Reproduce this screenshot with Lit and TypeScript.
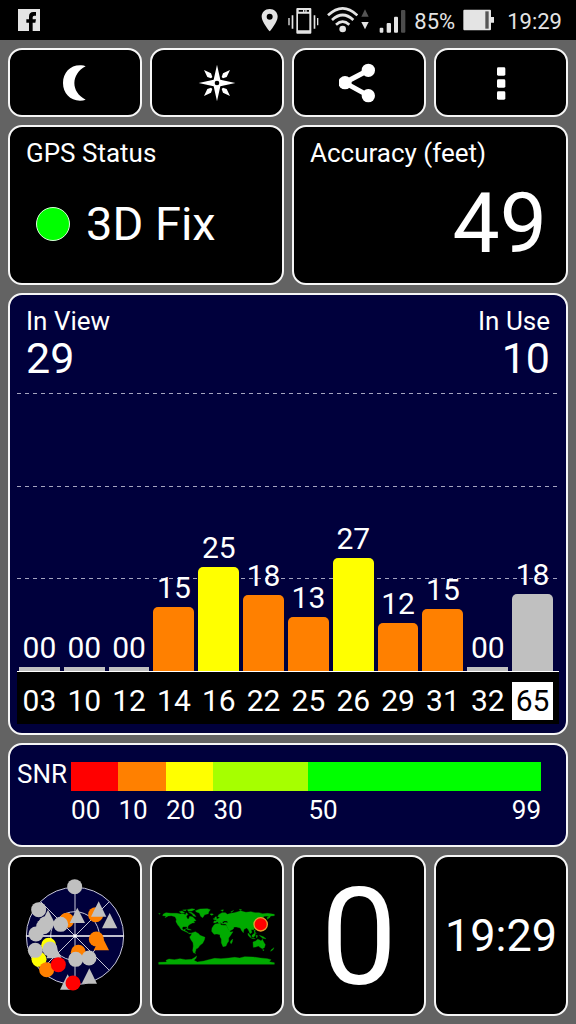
import { LitElement, html, svg, css } from "lit";
import { customElement } from "lit/decorators.js";
import { classMap } from "lit/directives/class-map.js";
import { styleMap } from "lit/directives/style-map.js";

interface Satellite {
  id: string;
  snr: string;
  level: number;
  color: string;
}

const GREY = "#c0c0c0";
const ORANGE = "#ff8000";
const YELLOW = "#ffff00";
const RED = "#ff0000";

/* level is the share of the plot height that the bar fills, in percent */
const SATELLITES: Satellite[] = [
  { id: "03", snr: "00", level: 1.5, color: GREY },
  { id: "10", snr: "00", level: 1.5, color: GREY },
  { id: "12", snr: "00", level: 1.5, color: GREY },
  { id: "14", snr: "15", level: 23, color: ORANGE },
  { id: "16", snr: "25", level: 37.4, color: YELLOW },
  { id: "22", snr: "18", level: 27.3, color: ORANGE },
  { id: "25", snr: "13", level: 19.3, color: ORANGE },
  { id: "26", snr: "27", level: 40.8, color: YELLOW },
  { id: "29", snr: "12", level: 17.2, color: ORANGE },
  { id: "31", snr: "15", level: 22.4, color: ORANGE },
  { id: "32", snr: "00", level: 1.5, color: GREY },
  { id: "65", snr: "18", level: 27.6, color: GREY },
];

const SCALE = [
  { from: "00", span: 10, color: RED },
  { from: "10", span: 10, color: ORANGE },
  { from: "20", span: 10, color: YELLOW },
  { from: "30", span: 20, color: "#a6ff00" },
  { from: "50", span: 49, color: "#00ff00" },
];

type Mark = ["dot" | "tri", number, number, string];

const SKY: Mark[] = [
  ["dot", 200, 210, ORANGE],
  ["dot", 287, 193, ORANGE],
  ["dot", 289, 266, ORANGE],
  ["tri", 304, 276, ORANGE],
  ["dot", 235, 306, ORANGE],
  ["dot", 146, 285, YELLOW],
  ["dot", 117, 327, YELLOW],
  ["dot", 140, 358, ORANGE],
  ["dot", 224, 109, GREY],
  ["dot", 116, 178, GREY],
  ["tri", 144, 200, GREY],
  ["dot", 138, 220, GREY],
  ["dot", 131, 229, GREY],
  ["dot", 108, 251, GREY],
  ["dot", 182, 222, GREY],
  ["tri", 232, 194, GREY],
  ["tri", 296, 175, GREY],
  ["tri", 329, 210, GREY],
  ["dot", 106, 300, GREY],
  ["tri", 162, 300, GREY],
  ["dot", 150, 296, GREY],
  ["dot", 227, 327, GREY],
  ["dot", 267, 323, GREY],
  ["tri", 268, 376, GREY],
  ["tri", 203, 394, GREY],
  ["dot", 175, 343, RED],
  ["dot", 219, 398, RED],
];

@customElement("status-strip")
export class StatusStrip extends LitElement {
  static styles = css`
    :host {
      display: flex;
      align-items: center;
      height: 40px;
      padding: 0 14px 0 18px;
      background: #000;
      color: #e4e4e4;
      font-size: 22px;
      line-height: 24px;
    }
    svg {
      display: block;
      flex: none;
      height: 40px;
      fill: currentColor;
    }
    .tray {
      display: flex;
      align-items: center;
      gap: 8px;
      margin-left: auto;
    }
    .text {
      padding-top: 3px;
    }
    .clock {
      margin-left: 5px;
    }
    .pin {
      margin-right: 2px;
    }
    .net {
      display: flex;
      gap: 3px;
      margin-right: 2px;
    }
  `;

  render() {
    return html`
      <svg width="22" viewBox="54 0 66 120" role="img" aria-label="Facebook">
        <path d="M54 27H120V93H98V68H106L108 58H98V52Q98 47 103 47H108V36H100Q87 36 87 50V58H79V68H87V93H54Z" />
      </svg>
      <div class="tray">
        <svg class="pin" width="17" viewBox="15 0 51 120">
          <path fill-rule="evenodd" d="M41 27C27 27 17 37 17 50C17 66 41 94 41 94S65 66 65 50C65 37 55 27 41 27ZM41 41A9 9 0 1 1 41 59A9 9 0 1 1 41 41Z" />
        </svg>
        <svg width="31" viewBox="95 0 93 120">
          <path fill-rule="evenodd" d="M123 24H162Q165 24 165 27V98Q165 101 162 101H123Q120 101 120 98V27Q120 24 123 24ZM125 41V91H159V41ZM127 30V35H140V30ZM144 30V35H147V30ZM151 30V35H158V30Z" />
          <path d="M96 54h4v22h-4zM106 46h5v40h-5zM172 46h5v40h-5zM182 54h4v22h-4z" />
        </svg>
        <div class="net">
          <svg width="31" viewBox="209 0 93 120">
            <g fill="none" stroke="currentColor" stroke-width="8">
              <path d="M212 46Q256 4 300 46" />
              <path d="M224 60Q256 30 288 60" />
              <path d="M236 74Q256 56 276 74" />
            </g>
            <circle cx="256" cy="87" r="10" />
          </svg>
          <svg width="8" viewBox="311 0 24 120">
            <path d="M323 28L334 50H312Z" fill="#555" />
            <path d="M312 66H334L323 88Z" />
          </svg>
        </div>
        <svg width="27" viewBox="368 0 81 120">
          <rect x="370" y="83" width="11" height="15" rx="3" />
          <rect x="391" y="69" width="13" height="29" rx="3" />
          <rect x="413" y="50" width="12" height="48" rx="3" />
          <rect x="434" y="30" width="13" height="68" rx="3" fill="#4c4c4c" />
        </svg>
        <span class="text">85%</span>
        <svg width="31" viewBox="620 0 93 120">
          <path d="M624 29H701Q704 29 704 32V51H713V68H704V88Q704 91 701 91H624Q621 91 621 88V32Q621 29 624 29Z" />
          <path d="M687 34h10v52h-10z" fill="#555" />
        </svg>
        <span class="text clock">19:29</span>
      </div>
    `;
  }
}

@customElement("signal-chart")
export class SignalChart extends LitElement {
  static styles = css`
    :host {
      display: flex;
      flex-direction: column;
    }
    .plot {
      flex: 1;
      display: grid;
      grid-template: minmax(0, 1fr) / minmax(0, 1fr);
      border-bottom: 1px solid #fff;
    }
    .lines,
    .bars {
      grid-area: 1 / 1;
    }
    .lines {
      display: grid;
      grid-template-rows: repeat(3, 1fr);
      margin-right: 2px;
    }
    .line {
      height: 1px;
      background: repeating-linear-gradient(to right, #a5a5c0 0 4px, transparent 4px 8px);
    }
    .bars,
    .ids {
      display: grid;
      grid-template-columns: repeat(12, minmax(0, 1fr));
      gap: 4px;
      padding: 0 6px 0 2px;
      font-size: 30px;
      text-align: center;
    }
    .slot {
      display: flex;
      flex-direction: column;
      justify-content: flex-end;
      align-items: center;
    }
    .snr {
      line-height: 30px;
      margin-bottom: 4px;
    }
    .bar {
      width: 100%;
      border-radius: 5px 5px 0 0;
    }
    .bar.empty {
      border-radius: 0;
    }
    .ids {
      padding-top: 10px;
      padding-bottom: 4px;
      background: #000;
      line-height: 38px;
    }
    .id.marked {
      background: #fff;
      color: #000;
    }
  `;

  render() {
    return html`
      <div class="plot">
        <div class="lines">
          <div class="line"></div>
          <div class="line"></div>
          <div class="line"></div>
        </div>
        <div class="bars">
          ${SATELLITES.map(
            (s) => html`<div class="slot">
              <span class="snr">${s.snr}</span>
              <div
                class=${classMap({ bar: true, empty: s.snr === "00" })}
                style=${styleMap({ height: `${s.level}%`, background: s.color })}
              ></div>
            </div>`
          )}
        </div>
      </div>
      <div class="ids">
        ${SATELLITES.map((s) => html`<span class=${classMap({ id: true, marked: s.id === "65" })}>${s.id}</span>`)}
      </div>
    `;
  }
}

@customElement("sky-view")
export class SkyView extends LitElement {
  static styles = css`
    :host,
    svg {
      display: block;
    }
  `;

  render() {
    return html`
      <svg width="102" height="120" viewBox="72 77 306 360" role="img" aria-label="Sky view">
        <g fill="#00003c" stroke="#c8c8d8" stroke-width="3">
          <circle cx="225" cy="257" r="146" />
          <circle cx="225" cy="257" r="73" />
          <path d="M225 111V403M122 154L328 360M328 154L122 360" />
          <path d="M79 257H371" stroke="#fff" stroke-width="4" />
        </g>
        <circle cx="225" cy="257" r="5" fill="#fff" />
        ${SKY.map(([kind, x, y, color]) =>
          kind === "dot"
            ? svg`<circle cx=${x} cy=${y} r="22.5" fill=${color} />`
            : svg`<path d=${`M${x} ${y - 22}L${x + 23} ${y + 24}H${x - 23}Z`} fill=${color} />`
        )}
      </svg>
    `;
  }
}

@customElement("world-map")
export class WorldMap extends LitElement {
  static styles = css`
    :host,
    svg {
      display: block;
    }
  `;

  render() {
    return html`
      <svg width="118" height="58" viewBox="36 50 354 174" role="img" aria-label="World map">
        <g fill="#00aa00" stroke="#00aa00" stroke-width="1">
          <path d="M38 69L43 70L40 72ZM52 71L60 67L75 69L92 69L104 71L112 70L118 73L121 67L126 72L121 78L124 85L128 86L131 78L140 80L147 87L150 91L143 93L146 97L139 98L132 102L126 107L125 115L122 109L112 109L108 113L112 119L118 116L117 121L124 124L126 128L137 128L132 131L121 125L106 118L99 108L96 105L90 94L91 87L87 79L76 76L67 77L57 82L60 77L50 76Z" />
          <path d="M100 64L108 62L116 67L106 69ZM110 59L121 58L118 62ZM124 58L138 55L147 57L138 62L127 63ZM128 66L136 66L146 73L150 79L142 77L138 71ZM119 114L129 116L136 119L126 118Z" />
          <path d="M148 61L162 56L184 55L193 58L188 65L187 70L176 73L170 82L164 78L160 68L151 65Z" />
          <path d="M137 128L148 124L158 130L162 135L177 141L175 149L170 159L162 165L156 173L150 176L149 183L146 186L150 189L143 188L140 181L142 167L141 157L134 147L131 140L136 134Z" />
          <path d="M198 113L204 104L208 101L222 99L225 104L233 105L241 105L247 117L253 125L261 124L253 136L248 143L248 153L244 158L240 167L231 169L226 157L226 146L222 139L222 133L213 131L204 132L197 123Z" />
          <path d="M254 152L260 146L259 154L256 160L253 158ZM192 71L199 70L202 73L196 75ZM207 80L211 79L213 88L205 89ZM202 85L205 84L204 88ZM224 60L232 58L231 63ZM254 65L263 60L257 66ZM280 57L287 58L282 60Z" />
          <path d="M203 98L204 92L211 92L210 88L219 83L221 81L215 79L218 73L228 67L238 67L244 72L255 69L265 67L276 64L284 61L293 64L300 66L315 64L327 67L339 67L350 70L365 69L385 72L385 76L374 77L371 82L363 87L364 80L370 77L355 78L347 84L346 90L338 93L332 97L336 104L332 105L328 101L324 104L329 111L323 118L315 118L318 126L312 130L307 118L302 113L294 117L292 127L287 121L283 113L271 110L264 110L262 116L250 123L244 111L242 105L239 101L230 101L236 96L246 97L243 92L235 92L229 95L231 101L226 99L221 94L224 100L218 98L214 94L209 97Z" />
          <path d="M344 104L348 100L351 94L349 103L345 107ZM324 119L328 120L327 125L331 130L326 128ZM306 128L315 138L313 142L306 134ZM318 135L326 128L328 134L323 141L318 139ZM330 135L335 136L332 143ZM314 142L328 145L321 145ZM340 135L352 139L360 145L350 144Z" />
          <path d="M321 155L329 152L335 147L341 149L345 152L349 147L353 155L358 163L355 172L349 175L342 171L337 167L329 170L322 171ZM350 178L354 178L352 182ZM375 179L384 172L381 178L374 183Z" />
          <path d="M38 216L62 215L60 210L69 206L85 208L102 205L119 208L137 207L145 202L152 197L150 204L144 210L154 215L174 212L188 208L206 204L225 205L249 203L266 201L281 203L296 199L322 200L343 203L364 205L375 208L370 214L385 217V222H38Z" />
        </g>
        <circle cx="344" cy="102" r="20" fill="#ff0000" stroke="#e8a030" stroke-width="4" />
      </svg>
    `;
  }
}

@customElement("app-root")
export class AppRoot extends LitElement {
  static styles = css`
    :host {
      display: flex;
      flex-direction: column;
      min-height: 100vh;
      background: #636363;
      color: #fff;
      font-family: Roboto, "Liberation Sans", sans-serif;
      font-size: 26px;
      line-height: 30px;
    }
    main {
      flex: 1;
      display: grid;
      grid-template-columns: repeat(4, minmax(0, 1fr));
      grid-template-rows: 69px 160px minmax(300px, 1fr) 104px 161px;
      gap: 8px;
      padding: 8px;
    }
    .card {
      box-sizing: border-box;
      margin: 0;
      border: 2px solid #f6f6f6;
      border-radius: 14px;
      background: #000;
      color: inherit;
      font: inherit;
      min-width: 0;
    }
    .center {
      display: flex;
      align-items: center;
      justify-content: center;
      padding: 0;
    }
    .center svg {
      display: block;
      fill: #fff;
    }
    .half {
      grid-column: span 2;
      display: flex;
      flex-direction: column;
      padding: 11px 16px 4px;
    }
    .wide {
      grid-column: 1 / -1;
      background: #00003c;
    }
    h2 {
      margin: 0;
      font: inherit;
    }
    .fix {
      flex: 1;
      display: flex;
      align-items: center;
      gap: 16px;
      padding-left: 10px;
      font-size: 47px;
      line-height: 56px;
    }
    .lamp {
      box-sizing: border-box;
      width: 34px;
      height: 34px;
      border: 1px solid #d8ffd8;
      border-radius: 50%;
      background: #00ff00;
    }
    .accuracy {
      flex: 1;
      display: flex;
      align-items: center;
      justify-content: flex-end;
      padding-right: 3px;
      font-size: 84px;
      line-height: 84px;
    }
    .signals {
      display: flex;
      flex-direction: column;
      gap: 13px;
      padding: 11px 7px 9px;
    }
    .counts {
      display: flex;
      justify-content: space-between;
      padding: 0 9px;
    }
    .in-use {
      text-align: right;
    }
    .count {
      font-size: 43px;
      line-height: 44px;
    }
    signal-chart {
      flex: 1;
    }
    .snr {
      display: grid;
      grid-template-columns: auto minmax(0, 1fr);
      column-gap: 4px;
      align-content: start;
      padding: 17px 25px 0 7px;
    }
    .snr h2 {
      line-height: 24px;
    }
    .ramp {
      display: grid;
      grid-template-columns: 10fr 10fr 10fr 20fr 49fr;
    }
    .swatch {
      height: 29px;
    }
    .tick {
      display: flex;
      justify-content: space-between;
      margin-top: 4px;
    }
    .speed {
      padding-top: 4px;
      font-size: 136px;
      line-height: 136px;
    }
    .time {
      font-size: 45px;
      line-height: 56px;
    }
  `;

  render() {
    return html`
      <status-strip></status-strip>
      <main>
        <button class="card center" aria-label="Night mode">
          <svg width="40" height="40" viewBox="165 187 120 120">
            <path d="M240 194Q250 193 257 197C212 220 212 275 257 297Q250 300 240 300C210 300 189 277 189 247C189 217 210 194 240 194Z" />
          </svg>
        </button>
        <button class="card center" aria-label="Compass">
          <svg width="40" height="40" viewBox="591 187 120 120">
            <path fill-rule="evenodd" d="M651 192L661 237L706 247L661 257L651 302L641 257L596 247L641 237ZM651 240A7 7 0 1 0 651 254A7 7 0 1 0 651 240Z" />
            <path d="M612 208L633 218L637 229L633 233L622 229ZM690 208L669 218L665 229L669 233L680 229ZM612 286L633 276L637 265L633 261L622 265ZM690 286L669 276L665 265L669 261L680 265Z" />
          </svg>
        </button>
        <button class="card center" aria-label="Share">
          <svg width="40" height="40" viewBox="249 187 120 120">
            <path d="M337 209L266 246L337 285" fill="none" stroke="#fff" stroke-width="15" />
            <circle cx="267" cy="246" r="20" />
            <circle cx="337" cy="209" r="20" />
            <circle cx="337" cy="285" r="20" />
          </svg>
        </button>
        <button class="card center" aria-label="Menu">
          <svg width="40" height="40" viewBox="675 187 120 120">
            <rect x="723" y="200" width="25" height="25" rx="4" />
            <rect x="723" y="236" width="25" height="25" rx="4" />
            <rect x="723" y="272" width="25" height="25" rx="4" />
          </svg>
        </button>

        <section class="card half">
          <h2>GPS Status</h2>
          <div class="fix"><span class="lamp"></span><span>3D Fix</span></div>
        </section>
        <section class="card half">
          <h2>Accuracy (feet)</h2>
          <div class="accuracy">49</div>
        </section>

        <section class="card wide signals">
          <div class="counts">
            <div>
              <h2>In View</h2>
              <div class="count">29</div>
            </div>
            <div class="in-use">
              <h2>In Use</h2>
              <div class="count">10</div>
            </div>
          </div>
          <signal-chart></signal-chart>
        </section>

        <section class="card wide snr">
          <h2>SNR</h2>
          <div class="ramp">
            ${SCALE.map(
              (band, i) => html`<div>
                <div class="swatch" style=${styleMap({ background: band.color })}></div>
                <div class="tick">
                  <span>${band.from}</span>
                  ${i === SCALE.length - 1 ? html`<span>99</span>` : ""}
                </div>
              </div>`
            )}
          </div>
        </section>

        <section class="card center"><sky-view></sky-view></section>
        <section class="card center"><world-map></world-map></section>
        <section class="card center speed">0</section>
        <section class="card center time">19:29</section>
      </main>
    `;
  }
}
